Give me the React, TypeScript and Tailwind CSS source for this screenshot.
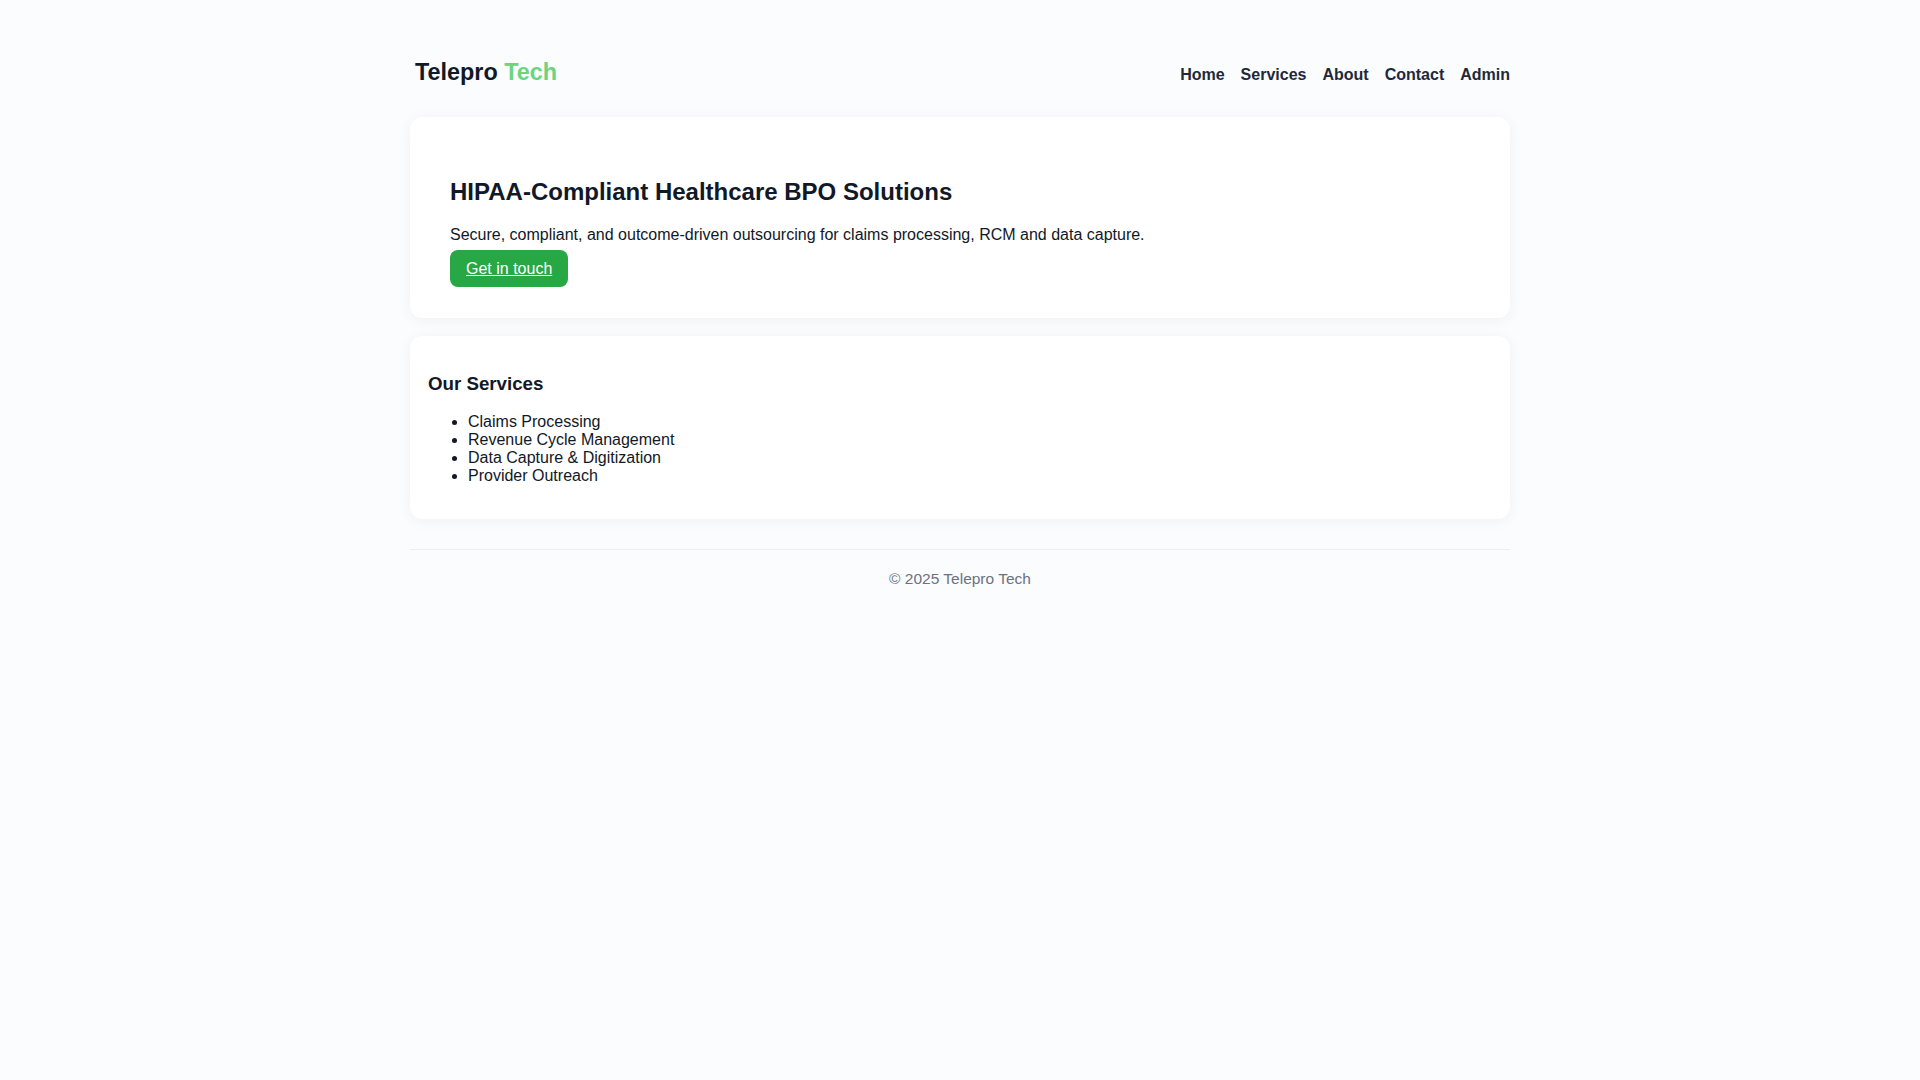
// App.tsx
// Telepro Tech landing page

const navLinks = ["Home", "Services", "About", "Contact", "Admin"];

const services = [
  "Claims Processing",
  "Revenue Cycle Management",
  "Data Capture & Digitization",
  "Provider Outreach",
];

export default function App() {
  return (
    <div className="min-h-screen bg-[#fbfcfe] font-['Liberation_Sans',Arial,sans-serif] text-[#1f2937]">
      <div className="mx-auto w-[1100px] pt-[55px]">
        {/* header */}
        <header className="flex items-baseline justify-between">
          <div className="pl-[5px] text-[23.4px] font-bold text-[#111827]">
            Telepro <span className="text-[#6dd47e]">Tech</span>
          </div>
          <nav className="flex gap-4 text-base font-bold text-[#1f2937]">
            {navLinks.map((link) => (
              <a key={link} href="#" className="leading-[18px]">
                {link}
              </a>
            ))}
          </nav>
        </header>

        {/* hero */}
        <section className="mt-[27px] rounded-xl bg-white px-[40px] pt-[61px] pb-[31px] shadow-[0_2px_14px_rgba(16,24,40,0.05)]">
          <h2 className="text-[24px] leading-[28px] font-bold text-[#111827]">
            HIPAA-Compliant Healthcare BPO Solutions
          </h2>
          <p className="mt-5 leading-[18px] text-[#111827]">
            Secure, compliant, and outcome-driven outsourcing for claims processing, RCM and data capture.
          </p>
          <a
            href="#"
            className="mt-[6px] inline-block rounded-lg bg-[#28a745] px-4 py-[9px] leading-[19px] text-white underline"
          >
            Get in touch
          </a>
        </section>

        {/* services */}
        <section className="mt-[18px] rounded-xl bg-white px-[18px] pt-[37px] pb-[34px] shadow-[0_2px_14px_rgba(16,24,40,0.05)]">
          <h3 className="text-[18.72px] leading-[21.5px] font-bold text-[#111827]">Our Services</h3>
          <ul className="mt-[18.5px] list-disc pl-10 text-[#111827]">
            {services.map((s) => (
              <li key={s} className="leading-[18px]">
                {s}
              </li>
            ))}
          </ul>
        </section>

        {/* footer */}
        <footer className="mt-[30px] border-t border-[#eceef2] pt-[20px] text-center text-[15.5px] leading-[18px] text-[#6b7280]">
          © 2025 Telepro Tech
        </footer>
      </div>
    </div>
  );
}
